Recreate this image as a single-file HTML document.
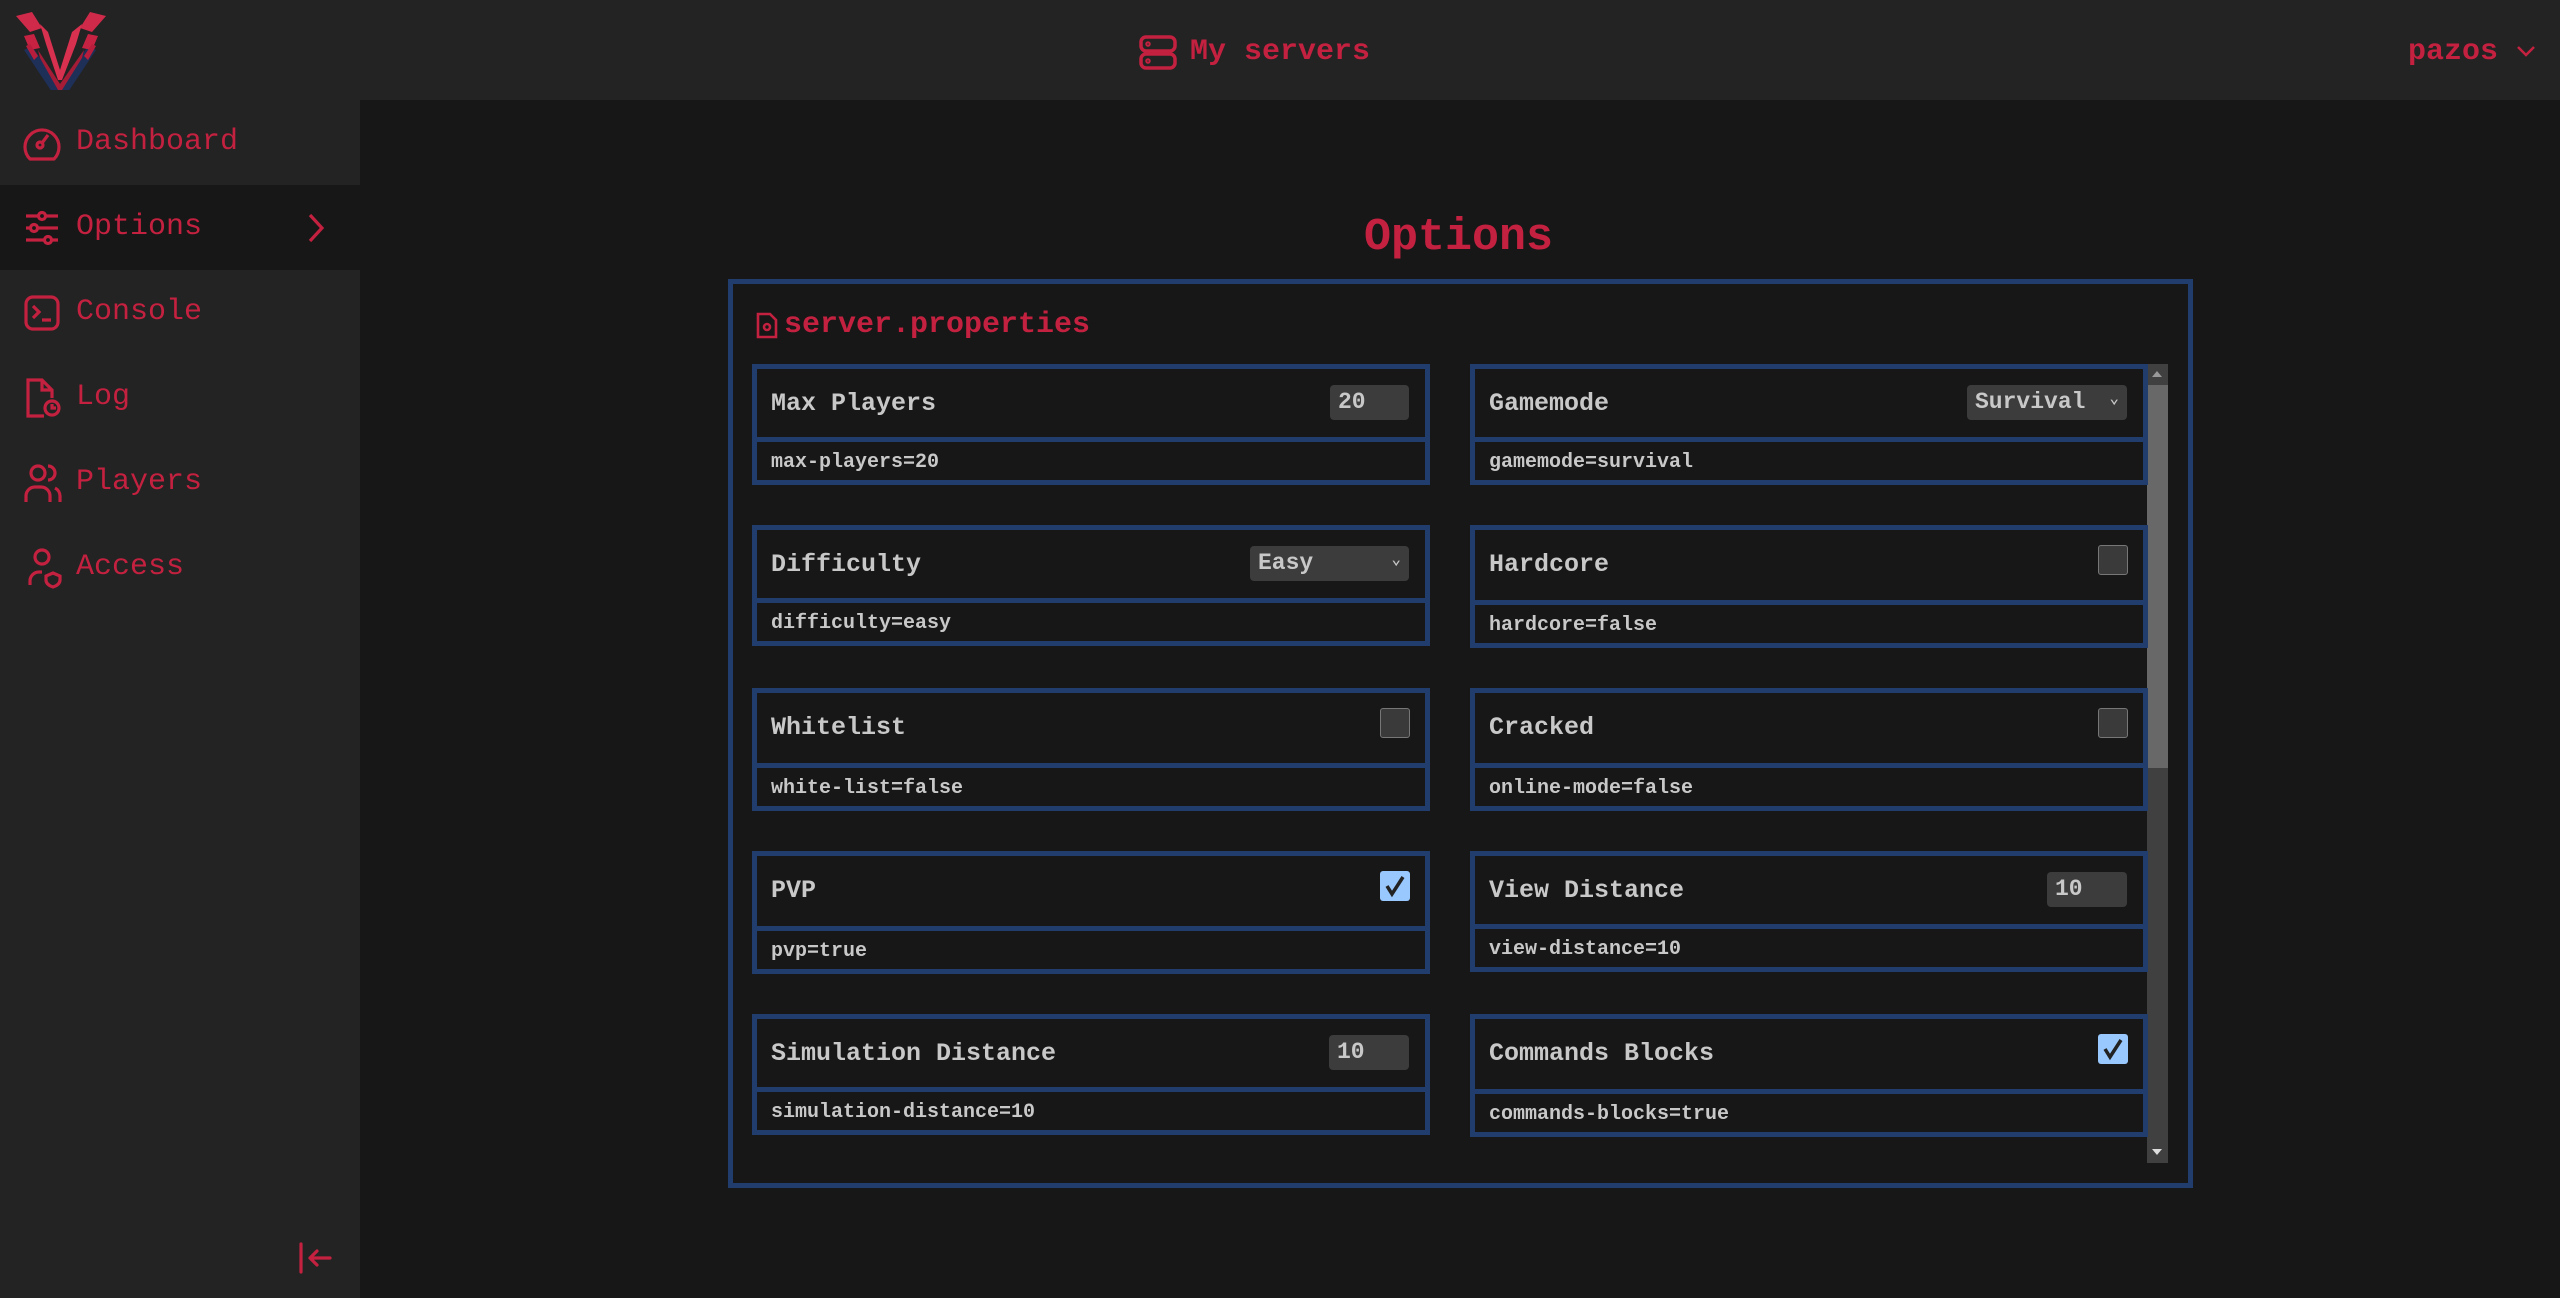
<!DOCTYPE html>
<html><head><meta charset="utf-8"><style>
*{box-sizing:border-box;margin:0;padding:0}
body{width:2560px;height:1298px;background:#171717;font-family:"Liberation Mono",monospace;overflow:hidden;position:relative}
.hdr{position:absolute;left:0;top:0;width:2560px;height:100px;background:#232323}
.side{position:absolute;left:0;top:100px;width:360px;height:1198px;background:#232323}
.red{color:#c3213f}
.item{position:absolute;left:0;width:360px;height:85px;display:flex;align-items:center;font-size:30px;color:#c3213f}
.item svg{position:absolute;left:22px}
.item span{position:absolute;left:76px;top:25px}
.abs{position:absolute}
.box{position:absolute;left:728px;top:279px;width:1465px;height:909px;border:5px solid #213d6e}
.card{position:absolute;width:678px;border:5px solid #213d6e;background:#171717}
.card .top{height:73px;border-bottom:5px solid #213d6e;position:relative}
.card .lbl{position:absolute;left:14px;top:20px;font-size:25px;font-weight:bold;color:#c8c8c8}
.card .bot{height:38px;position:relative}
.card .val{position:absolute;left:14px;top:9px;font-size:20px;font-weight:bold;color:#c8c8c8}
.inp{position:absolute;right:16px;top:16px;height:35px;line-height:35px;background:#3c3c3c;border-radius:4px;color:#c8c8c8;font-size:23px;font-weight:bold;padding:0 8px}
.chk{position:absolute;right:15px;top:15px;width:30px;height:30px;border-radius:3px;background:#3a3a3a;border:1px solid #777}
.chk.on{background:#99c8ff;border:none}
</style></head><body>
<div class="hdr"></div>
<svg class="abs" style="left:12px;top:10px" width="98" height="80" viewBox="0 0 98 80">
<path d="M20 36 L48 78 L76 36 L84 40 L52 88 L44 88 L12 40 Z" fill="#1e2f58"/>
<path d="M4 6 L20 2 L30 18 L18 22 Z" fill="#d02a4a"/>
<path d="M94 6 L78 2 L68 18 L80 22 Z" fill="#d02a4a"/>
<path d="M12 26 L22 24 L28 38 L18 40 Z" fill="#c82242"/>
<path d="M86 26 L76 24 L70 38 L80 40 Z" fill="#c82242"/>
<path d="M14 36 L22 50 L26 46 L18 34 Z" fill="#b81e3c"/>
<path d="M84 36 L76 50 L72 46 L80 34 Z" fill="#b81e3c"/>
<path d="M28 14 L36 22 L48 60 L60 22 L70 14 L64 34 L50 70 L46 70 L34 34 Z" fill="#d8304f"/>
<path d="M26 40 L48 74 L72 40 L70 48 L50 80 L46 80 L28 48 Z" fill="#a51c37"/>
</svg>
<svg class="abs" style="left:1139px;top:35px" width="38" height="35" viewBox="0 0 38 35" fill="none" stroke="#c3213f" stroke-width="3.5"><rect x="2" y="2" width="34" height="14" rx="5"/><rect x="2" y="19" width="34" height="14" rx="5"/><circle cx="9" cy="9" r="1" /><circle cx="9" cy="26" r="1"/></svg>
<div class="abs red" style="left:1190px;top:35px;font-size:30px;font-weight:bold">My servers</div>
<div class="abs red" style="left:2408px;top:35px;font-size:30px;font-weight:bold">pazos</div>
<svg class="abs" style="left:2516px;top:44px" width="20" height="14" viewBox="0 0 20 14" fill="none" stroke="#c3213f" stroke-width="2.5"><path d="M2 3 L10 11 L18 3"/></svg>
<div class="side"></div>
<div class="item" style="top:100px"><svg width="40" height="40" viewBox="0 0 40 40" fill="none" stroke="#c3213f" stroke-width="3.2"><path d="M8 36 A17 17 0 1 1 32 36 Z" stroke-linejoin="round"/><circle cx="18" cy="22" r="3"/><path d="M20 20 L26 12"/></svg><span>Dashboard</span></div>
<div class="item" style="top:185px;background:#171717"><svg width="40" height="40" viewBox="0 0 40 40" fill="none" stroke="#c3213f" stroke-width="3.2"><path d="M4 8H36M4 20H36M4 32H36"/><circle cx="20" cy="8" r="3.5" fill="#171717"/><circle cx="12" cy="20" r="3.5" fill="#171717"/><circle cx="26" cy="32" r="3.5" fill="#171717"/></svg><span>Options</span>
<svg style="left:306px" width="20" height="32" viewBox="0 0 20 32" fill="none" stroke="#c3213f" stroke-width="3.2"><path d="M4 3 L16 16 L4 29"/></svg></div>
<div class="item" style="top:270px"><svg width="40" height="40" viewBox="0 0 40 40" fill="none" stroke="#c3213f" stroke-width="3.2"><rect x="4" y="4" width="32" height="32" rx="7"/><path d="M11 13 L17 19 L11 25M20 27H29"/></svg><span>Console</span></div>
<div class="item" style="top:355px"><svg width="40" height="44" viewBox="0 0 40 44" fill="none" stroke="#c3213f" stroke-width="3.2"><path d="M22 40H6V4H20L30 14V22M20 4V14H30"/><circle cx="30" cy="32" r="7"/><path d="M30 28V32H34"/></svg><span>Log</span></div>
<div class="item" style="top:440px"><svg width="42" height="42" viewBox="0 0 42 42" fill="none" stroke="#c3213f" stroke-width="3.2"><circle cx="16" cy="11" r="7"/><path d="M4 40V34A9 9 0 0 1 13 25H19A9 9 0 0 1 28 34V40M26 4A7 7 0 0 1 26 18M33 26A9 9 0 0 1 38 34V40"/></svg><span>Players</span></div>
<div class="item" style="top:525px"><svg width="42" height="42" viewBox="0 0 42 42" fill="none" stroke="#c3213f" stroke-width="3.2"><circle cx="20" cy="10" r="7"/><path d="M8 38V34A9 9 0 0 1 17 25H20M31 26L38 29V33C38 37 34 39 31 40C28 39 24 37 24 33V29Z"/></svg><span>Access</span></div>
<svg class="abs" style="left:296px;top:1241px" width="40" height="34" viewBox="0 0 40 34" fill="none" stroke="#c3213f" stroke-width="3.2" stroke-linecap="round"><path d="M5 3V31M14 17H34M14 17L21 10M14 17L21 24"/></svg>

<div class="abs red" style="left:1364px;top:212px;font-size:45px;font-weight:bold">Options</div>
<div class="box"></div>
<svg class="abs" style="left:756px;top:312px" width="22" height="27" viewBox="0 0 22 27" fill="none" stroke="#c3213f" stroke-width="2.6"><path d="M2 2H14L20 8V25H2Z"/><circle cx="11" cy="15" r="3"/></svg>
<div class="abs red" style="left:784px;top:308px;font-size:30px;font-weight:bold">server.properties</div>

<div class="abs" style="left:2147px;top:364px;width:21px;height:799px;background:#404040"></div>
<div class="abs" style="left:2147px;top:385px;width:21px;height:383px;background:#686868"></div>
<svg class="abs" style="left:2151px;top:370px" width="12" height="8"><path d="M1 7L6 1L11 7Z" fill="#999"/></svg>
<svg class="abs" style="left:2151px;top:1148px" width="12" height="8"><path d="M1 1L6 7L11 1Z" fill="#ddd"/></svg>

<div class="card" style="left:752px;top:364px"><div class="top"><div class="lbl">Max Players</div><div class="inp" style="width:79px">20</div></div><div class="bot"><div class="val">max-players=20</div></div></div>
<div class="card" style="left:1470px;top:364px"><div class="top"><div class="lbl">Gamemode</div><div class="inp" style="width:160px">Survival<span style="position:absolute;right:8px;top:-3px;font-size:16px">⌄</span></div></div><div class="bot"><div class="val">gamemode=survival</div></div></div>

<div class="card" style="left:752px;top:525px"><div class="top"><div class="lbl">Difficulty</div><div class="inp" style="width:159px">Easy<span style="position:absolute;right:8px;top:-3px;font-size:16px">⌄</span></div></div><div class="bot"><div class="val">difficulty=easy</div></div></div>
<div class="card" style="left:1470px;top:525px"><div class="top" style="height:75px"><div class="lbl">Hardcore</div><div class="chk"></div></div><div class="bot"><div class="val">hardcore=false</div></div></div>

<div class="card" style="left:752px;top:688px"><div class="top" style="height:75px"><div class="lbl">Whitelist</div><div class="chk"></div></div><div class="bot"><div class="val">white-list=false</div></div></div>
<div class="card" style="left:1470px;top:688px"><div class="top" style="height:75px"><div class="lbl">Cracked</div><div class="chk"></div></div><div class="bot"><div class="val">online-mode=false</div></div></div>

<div class="card" style="left:752px;top:851px"><div class="top" style="height:75px"><div class="lbl">PVP</div><div class="chk on"><svg width="30" height="30" viewBox="0 0 30 30"><path d="M7 15L12 23L23 6" fill="none" stroke="#222" stroke-width="3.5"/></svg></div></div><div class="bot"><div class="val">pvp=true</div></div></div>
<div class="card" style="left:1470px;top:851px"><div class="top"><div class="lbl">View Distance</div><div class="inp" style="width:80px">10</div></div><div class="bot"><div class="val">view-distance=10</div></div></div>

<div class="card" style="left:752px;top:1014px"><div class="top"><div class="lbl">Simulation Distance</div><div class="inp" style="width:80px">10</div></div><div class="bot"><div class="val">simulation-distance=10</div></div></div>
<div class="card" style="left:1470px;top:1014px"><div class="top" style="height:75px"><div class="lbl">Commands Blocks</div><div class="chk on"><svg width="30" height="30" viewBox="0 0 30 30"><path d="M7 15L12 23L23 6" fill="none" stroke="#222" stroke-width="3.5"/></svg></div></div><div class="bot"><div class="val">commands-blocks=true</div></div></div>
</body></html>
